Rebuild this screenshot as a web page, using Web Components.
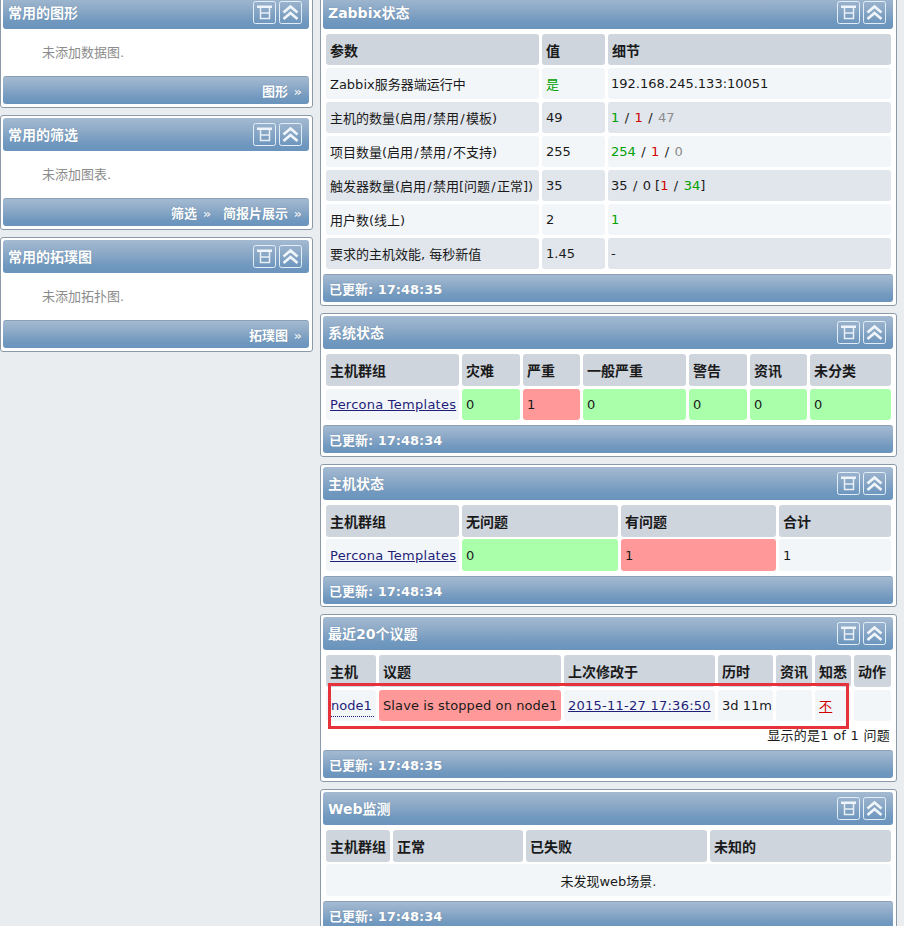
<!DOCTYPE html>
<html>
<head>
<meta charset="utf-8">
<title>Zabbix</title>
<style>
  html { overflow: hidden; }
  body {
    margin: 0;
    background: #e9edf0;
    font: 13px "DejaVu Sans", "Noto Sans CJK SC", sans-serif;
    color: #1a1a1a;
  }
</style>
</head>
<body>
<z-dashboard>
  <z-widget slot="left" title="常用的图形">
    <z-empty>未添加数据图.</z-empty>
    <z-bar slot="footer" align="right"><z-more>图形</z-more></z-bar>
  </z-widget>
  <z-widget slot="left" title="常用的筛选">
    <z-empty>未添加图表.</z-empty>
    <z-bar slot="footer" align="right"><z-more>筛选</z-more><z-more>简报片展示</z-more></z-bar>
  </z-widget>
  <z-widget slot="left" title="常用的拓璞图">
    <z-empty>未添加拓扑图.</z-empty>
    <z-bar slot="footer" align="right"><z-more>拓璞图</z-more></z-bar>
  </z-widget>

  <z-widget slot="right" title="Zabbix状态">
    <z-grid cols="213px 63px 283px">
      <z-cell head>参数</z-cell><z-cell head>值</z-cell><z-cell head>细节</z-cell>
      <z-cell odd>Zabbix服务器端运行中</z-cell><z-cell odd><z-t c="ok">是</z-t></z-cell><z-cell odd pull>192.168.245.133:10051</z-cell>
      <z-cell even>主机的数量(启用<z-s>/</z-s>禁用<z-s>/</z-s>模板)</z-cell><z-cell even>49</z-cell><z-cell even pull><z-t c="ok">1</z-t> <z-s>/</z-s> <z-t c="bad">1</z-t> <z-s>/</z-s> <z-t c="off">47</z-t></z-cell>
      <z-cell odd>项目数量(启用<z-s>/</z-s>禁用<z-s>/</z-s>不支持)</z-cell><z-cell odd>255</z-cell><z-cell odd pull><z-t c="ok">254</z-t> <z-s>/</z-s> <z-t c="bad">1</z-t> <z-s>/</z-s> <z-t c="off">0</z-t></z-cell>
      <z-cell even>触发器数量(启用<z-s>/</z-s>禁用[问题<z-s>/</z-s>正常])</z-cell><z-cell even>35</z-cell><z-cell even pull>35 <z-s>/</z-s> 0 [<z-t c="bad">1</z-t> <z-s>/</z-s> <z-t c="ok">34</z-t>]</z-cell>
      <z-cell odd>用户数(线上)</z-cell><z-cell odd>2</z-cell><z-cell odd pull><z-t c="ok">1</z-t></z-cell>
      <z-cell even>要求的主机效能, 每秒新值</z-cell><z-cell even>1.45</z-cell><z-cell even pull>-</z-cell>
    </z-grid>
    <z-bar slot="footer">已更新: 17:48:35</z-bar>
  </z-widget>

  <z-widget slot="right" title="系统状态">
    <z-grid cols="133px 58px 57px 103px 58px 57px 81px" rows="32px 31px">
      <z-cell head>主机群组</z-cell><z-cell head>灾难</z-cell><z-cell head>严重</z-cell><z-cell head>一般严重</z-cell><z-cell head>警告</z-cell><z-cell head>资讯</z-cell><z-cell head>未分类</z-cell>
      <z-cell odd><z-link>Percona Templates</z-link></z-cell><z-cell good>0</z-cell><z-cell fail>1</z-cell><z-cell good>0</z-cell><z-cell good>0</z-cell><z-cell good>0</z-cell><z-cell good>0</z-cell>
    </z-grid>
    <z-bar slot="footer">已更新: 17:48:34</z-bar>
  </z-widget>

  <z-widget slot="right" title="主机状态" style="padding-bottom: 2px">
    <z-grid cols="133px 156px 155px 112px" rows="32px 32px" gap="2px">
      <z-cell head>主机群组</z-cell><z-cell head>无问题</z-cell><z-cell head>有问题</z-cell><z-cell head>合计</z-cell>
      <z-cell odd><z-link>Percona Templates</z-link></z-cell><z-cell good>0</z-cell><z-cell fail>1</z-cell><z-cell odd>1</z-cell>
    </z-grid>
    <z-bar slot="footer">已更新: 17:48:34</z-bar>
  </z-widget>

  <z-widget slot="right" title="最近20个议题">
    <z-grid cols="50px 182px 151px 55px 36px 36px 37px" rows="32px 31px">
      <z-cell head>主机</z-cell><z-cell head>议题</z-cell><z-cell head>上次修改于</z-cell><z-cell head>历时</z-cell><z-cell head>资讯</z-cell><z-cell head>知悉</z-cell><z-cell head>动作</z-cell>
      <z-cell odd><z-link dotted>node1</z-link></z-cell><z-cell fail>Slave is stopped on node1</z-cell><z-cell odd><z-link>2015-11-27 17:36:50</z-link></z-cell><z-cell odd>3d 11m</z-cell><z-cell odd></z-cell><z-cell odd><z-link bad>不</z-link></z-cell><z-cell odd></z-cell>
    </z-grid>
    <z-note>显示的是1 of 1 问题</z-note>
    <z-bar slot="footer">已更新: 17:48:35</z-bar>
    <z-mark></z-mark>
  </z-widget>

  <z-widget slot="right" title="Web监测">
    <z-grid cols="64px 130px 181px 181px" rows="32px 32px" gap="2px">
      <z-cell head>主机群组</z-cell><z-cell head>正常</z-cell><z-cell head>已失败</z-cell><z-cell head>未知的</z-cell>
      <z-cell odd span center>未发现web场景.</z-cell>
    </z-grid>
    <z-bar slot="footer">已更新: 17:48:34</z-bar>
  </z-widget>
</z-dashboard>

<script>
  const BAR_BG = 'linear-gradient(to bottom, #a4bad2 0%, #8fabc8 35%, #7299bf 75%, #6a94bd 100%)';

  function define(name, css, html) {
    customElements.define(name, class extends HTMLElement {
      constructor() {
        super();
        this.attachShadow({ mode: 'open' });
        this.shadowRoot.innerHTML = `<style>${css}</style>${html}`;
      }
    });
  }

  define('z-dashboard', `
    :host { display: grid; grid-template-columns: 313px 577px; column-gap: 7px; margin-top: -7px; align-items: start; }
    .col { display: flex; flex-direction: column; gap: 7px; }
  `, `<div class="col"><slot name="left"></slot></div><div class="col"><slot name="right"></slot></div>`);

  class ZWidget extends HTMLElement {
    constructor() {
      super();
      this.attachShadow({ mode: 'open' });
      this.shadowRoot.innerHTML = `
        <style>
          :host {
            display: block; position: relative; box-sizing: border-box;
            background: #fff; border: 1px solid #8c9aa8; border-radius: 3px; padding: 2px 3px 3px 2px;
          }
          .head {
            height: 33px; display: flex; align-items: center; justify-content: space-between;
            box-sizing: border-box; padding: 0 7px 0 5px; border-radius: 3px;
            background: ${BAR_BG};
            color: #fff; font-size: 14px; font-weight: bold;
            text-shadow: 0 0 1px #5d7f9f;
          }
          .title { margin-top: -2px; }
          .icons { display: flex; gap: 3px; }
          svg { display: block; }
        </style>
        <div class="head">
          <span class="title"></span>
          <span class="icons">
            <svg width="23" height="23" viewBox="0 0 23 23" fill="none">
              <rect x=".5" y=".5" width="22" height="22" rx="2" stroke="#e2eef7"/>
              <rect x="4" y="4.500" width="15" height="2.500" fill="#eef4f9"/>
              <path d="M7.500 7v10.500h9V7M7.500 12h9" stroke="#e8f0f6" stroke-width="1.500"/>
            </svg>
            <svg width="23" height="23" viewBox="0 0 23 23" fill="none">
              <rect x=".5" y=".5" width="22" height="22" rx="2" stroke="#e2eef7"/>
              <path d="M4.500 11.500l7-6 7 6M4.500 18l7-6 7 6" stroke="#f0f5f9" stroke-width="2.700"/>
            </svg>
          </span>
        </div>
        <slot></slot>
        <slot name="footer"></slot>`;
    }

    connectedCallback() {
      this.shadowRoot.querySelector('.title').textContent = this.getAttribute('title');
      this.removeAttribute('title');
    }
  }
  customElements.define('z-widget', ZWidget);

  define('z-bar', `
    :host {
      display: flex; align-items: center; box-sizing: border-box; height: 28px; margin-top: 5px;
      padding: 0 6px; gap: 12px; border-radius: 3px; border-top: 1px solid #8a9fb5;
      background: ${BAR_BG};
      color: #fff; font-size: 13px; font-weight: bold; text-shadow: 0 0 1px #5d7f9f;
    }
    :host([align="right"]) { justify-content: flex-end; margin-top: 0; padding-right: 7px; }
  `, `<slot></slot>`);

  define('z-more', `
    :host { display: inline; }
    span { color: #e6eef5; margin-left: 1px; }
  `, `<slot></slot> <span>»</span>`);

  define('z-empty', `
    :host { display: block; height: 47px; line-height: 48px; padding-left: 39px; color: #8c8c8c; }
  `, `<slot></slot>`);

  define('z-note', `
    :host { display: block; text-align: right; height: 19px; line-height: 20px; padding-right: 3px; margin-top: 5px; letter-spacing: .25px; }
  `, `<slot></slot>`);

  class ZGrid extends HTMLElement {
    constructor() {
      super();
      this.attachShadow({ mode: 'open' });
      this.shadowRoot.innerHTML = `
        <style>
          :host { display: grid; gap: 3px; padding: 5px 2px 0 3px; grid-auto-rows: 31px; }
        </style>
        <slot></slot>`;
    }

    connectedCallback() {
      this.style.gridTemplateColumns = this.getAttribute('cols');
      if (this.hasAttribute('rows')) this.style.gridTemplateRows = this.getAttribute('rows');
      if (this.hasAttribute('gap')) this.style.rowGap = this.getAttribute('gap');
    }
  }
  customElements.define('z-grid', ZGrid);

  define('z-cell', `
    :host {
      display: flex; align-items: center; box-sizing: border-box; padding: 0 4px; border-radius: 3px;
      background: #f2f6f9; min-width: 0;
    }
    :host([head]) { background: #ced5dd; font-weight: bold; font-size: 14px; }
    :host([even]) { background: #e1e5ec; }
    :host([good]) { background: #aaffaa; }
    :host([fail]) { background: #ff9999; letter-spacing: .1px; }
    :host([span]) { grid-column: 1 / -1; }
    :host([center]) { justify-content: center; }
    :host([pull]) { padding-left: 3px; }
    div { white-space: pre; }
  `, `<div><slot></slot></div>`);

  define('z-t', `
    :host { display: inline; }
    :host([c="ok"]) { color: #00a000; }
    :host([c="bad"]) { color: #d00000; }
    :host([c="off"]) { color: #8c8c8c; }
  `, `<slot></slot>`);

  define('z-s', `
    :host { display: inline; padding: 0 1.25px; }
  `, `<slot></slot>`);

  define('z-link', `
    :host { display: inline; color: #1f1f7a; text-decoration: underline; letter-spacing: .25px; }
    :host([dotted]) { text-decoration: none; border-bottom: 1px dotted #1f1f7a; padding: 0 2px 3px 1px; letter-spacing: 0; }
    :host([bad]) { color: #d00000; }
  `, `<slot></slot>`);

  define('z-mark', `
    :host {
      position: absolute; left: 7px; top: 68px; width: 521px; height: 46px; box-sizing: border-box;
      border: 3px solid #e6323a; pointer-events: none;
    }
  `, ``);
</script>
</body>
</html>
